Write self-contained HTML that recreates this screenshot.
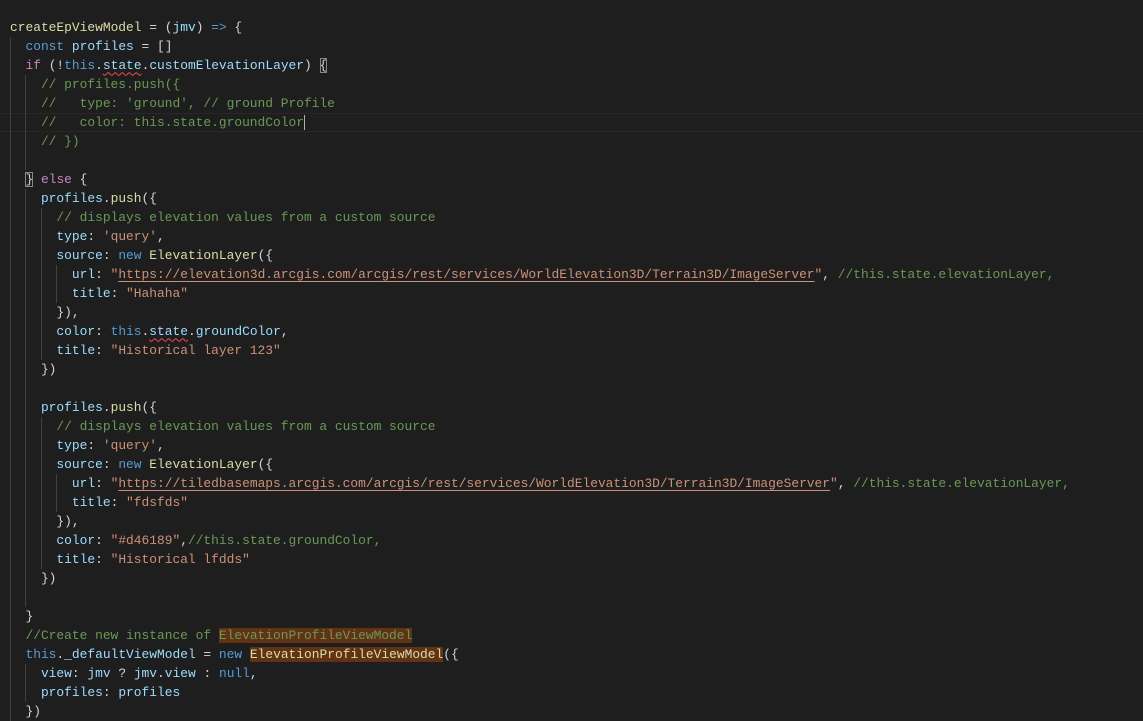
<!DOCTYPE html>
<html><head><meta charset="utf-8"><style>
html,body{margin:0;padding:0;background:#1e1e1e;width:1143px;height:718px;overflow:hidden}
.ed{position:absolute;left:10px;top:17.5px;font-family:"Liberation Mono",monospace;font-size:12.9px;line-height:19px;color:#d4d4d4}
.l{height:19px;position:relative;white-space:pre}
.g{display:inline-block;width:2ch;height:19px;vertical-align:top;background:linear-gradient(#404040,#404040) no-repeat 0 0/1px 100%}
.cur{box-shadow:inset 0 1px #282828,inset 0 -1px #282828;margin-left:-10px;padding-left:10px;width:1133px}
.k{color:#569cd6}.c{color:#c586c0}.v{color:#9cdcfe}.f{color:#dcdcaa}.s{color:#ce9178}.m{color:#6a9955}
.u{text-decoration:underline;text-underline-offset:3px}
.sq{text-decoration:underline wavy #f14c4c;text-decoration-thickness:1px;text-underline-offset:3px}
.hl{background:#613214}
.br{outline:1px solid #888;outline-offset:-1px}
.caret{border-right:1.5px solid #aeafad}
</style></head><body><div class="ed"><div class="l"><span class="f">createEpViewModel</span> = (<span class="v">jmv</span>) <span class="k">=&gt;</span> {</div><div class="l"><span class="g">  </span><span class="k">const</span> <span class="v">profiles</span> = []</div><div class="l"><span class="g">  </span><span class="c">if</span> (!<span class="k">this</span>.<span class="v sq">state</span>.<span class="v">customElevationLayer</span>) <span class="br">{</span></div><div class="l"><span class="g">  </span><span class="g">  </span><span class="m">// profiles.push({</span></div><div class="l"><span class="g">  </span><span class="g">  </span><span class="m">//   type: 'ground', // ground Profile</span></div><div class="l cur"><span class="g">  </span><span class="g">  </span><span class="m caret">//   color: this.state.groundColor</span></div><div class="l"><span class="g">  </span><span class="g">  </span><span class="m">// })</span></div><div class="l"><span class="g">  </span><span class="g">  </span></div><div class="l"><span class="g">  </span><span class="br">}</span> <span class="c">else</span> {</div><div class="l"><span class="g">  </span><span class="g">  </span><span class="v">profiles</span>.<span class="f">push</span>({</div><div class="l"><span class="g">  </span><span class="g">  </span><span class="g">  </span><span class="m">// displays elevation values from a custom source</span></div><div class="l"><span class="g">  </span><span class="g">  </span><span class="g">  </span><span class="v">type</span>: <span class="s">'query'</span>,</div><div class="l"><span class="g">  </span><span class="g">  </span><span class="g">  </span><span class="v">source</span>: <span class="k">new</span> <span class="f">ElevationLayer</span>({</div><div class="l"><span class="g">  </span><span class="g">  </span><span class="g">  </span><span class="g">  </span><span class="v">url</span>: <span class="s">"<span class="u">https://elevation3d.arcgis.com/arcgis/rest/services/WorldElevation3D/Terrain3D/ImageServer</span>"</span>, <span class="m">//this.state.elevationLayer,</span></div><div class="l"><span class="g">  </span><span class="g">  </span><span class="g">  </span><span class="g">  </span><span class="v">title</span>: <span class="s">"Hahaha"</span></div><div class="l"><span class="g">  </span><span class="g">  </span><span class="g">  </span>}),</div><div class="l"><span class="g">  </span><span class="g">  </span><span class="g">  </span><span class="v">color</span>: <span class="k">this</span>.<span class="v sq">state</span>.<span class="v">groundColor</span>,</div><div class="l"><span class="g">  </span><span class="g">  </span><span class="g">  </span><span class="v">title</span>: <span class="s">"Historical layer 123"</span></div><div class="l"><span class="g">  </span><span class="g">  </span>})</div><div class="l"><span class="g">  </span><span class="g">  </span></div><div class="l"><span class="g">  </span><span class="g">  </span><span class="v">profiles</span>.<span class="f">push</span>({</div><div class="l"><span class="g">  </span><span class="g">  </span><span class="g">  </span><span class="m">// displays elevation values from a custom source</span></div><div class="l"><span class="g">  </span><span class="g">  </span><span class="g">  </span><span class="v">type</span>: <span class="s">'query'</span>,</div><div class="l"><span class="g">  </span><span class="g">  </span><span class="g">  </span><span class="v">source</span>: <span class="k">new</span> <span class="f">ElevationLayer</span>({</div><div class="l"><span class="g">  </span><span class="g">  </span><span class="g">  </span><span class="g">  </span><span class="v">url</span>: <span class="s">"<span class="u">https://tiledbasemaps.arcgis.com/arcgis/rest/services/WorldElevation3D/Terrain3D/ImageServer</span>"</span>, <span class="m">//this.state.elevationLayer,</span></div><div class="l"><span class="g">  </span><span class="g">  </span><span class="g">  </span><span class="g">  </span><span class="v">title</span>: <span class="s">"fdsfds"</span></div><div class="l"><span class="g">  </span><span class="g">  </span><span class="g">  </span>}),</div><div class="l"><span class="g">  </span><span class="g">  </span><span class="g">  </span><span class="v">color</span>: <span class="s">"#d46189"</span>,<span class="m">//this.state.groundColor,</span></div><div class="l"><span class="g">  </span><span class="g">  </span><span class="g">  </span><span class="v">title</span>: <span class="s">"Historical lfdds"</span></div><div class="l"><span class="g">  </span><span class="g">  </span>})</div><div class="l"><span class="g">  </span><span class="g">  </span></div><div class="l"><span class="g">  </span>}</div><div class="l"><span class="g">  </span><span class="m">//Create new instance of <span class="hl">ElevationProfileViewModel</span></span></div><div class="l"><span class="g">  </span><span class="k">this</span>.<span class="v">_defaultViewModel</span> = <span class="k">new</span> <span class="f hl">ElevationProfileViewModel</span>({</div><div class="l"><span class="g">  </span><span class="g">  </span><span class="v">view</span>: <span class="v">jmv</span> ? <span class="v">jmv</span>.<span class="v">view</span> : <span class="k">null</span>,</div><div class="l"><span class="g">  </span><span class="g">  </span><span class="v">profiles</span>: <span class="v">profiles</span></div><div class="l"><span class="g">  </span>})</div></div></body></html>
